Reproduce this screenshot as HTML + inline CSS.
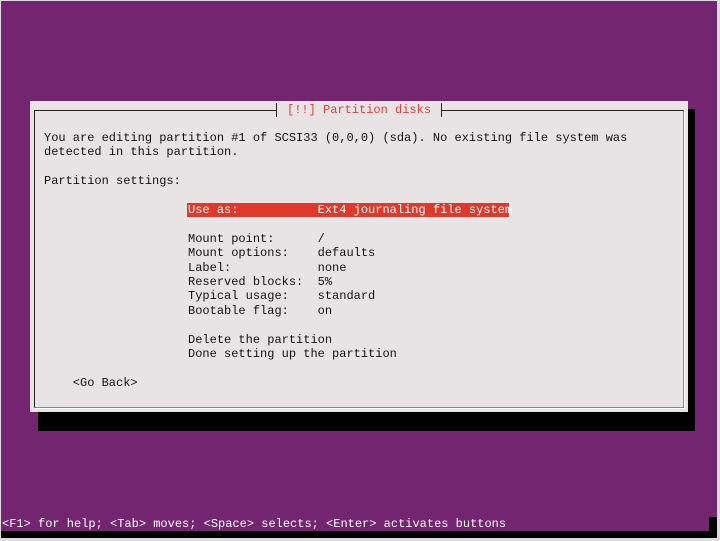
<!DOCTYPE html>
<html><head><style>
html,body{margin:0;padding:0}
body{width:720px;height:541px;background:#dcdcdc;position:relative;overflow:hidden;font-family:"Liberation Mono",monospace;font-size:12px}
.scr{position:absolute;left:1px;top:1px;width:716px;height:537px;background:#74256f}
.bot{position:absolute;left:1px;top:531px;width:716px;height:7px;background:#000}
.botr{position:absolute;left:709px;top:517px;width:8px;height:21px;background:#000}
.shadow{position:absolute;left:38px;top:412px;width:657px;height:19px;background:#000}
.shadow2{position:absolute;left:688px;top:109px;width:7px;height:322px;background:#000}
.dlg{position:absolute;left:30px;top:101px;width:658px;height:311px;background:#e8e4e6}
.frame{position:absolute;left:34px;top:110px;width:648px;height:296px;border:1px solid #222;border-right-color:#888;border-bottom-color:#888;box-shadow:1px 1px 0 #fff}
.title{position:absolute;left:276px;top:103px;height:15px;background:#e8e4e6;color:#e0403a;line-height:15px;white-space:pre;padding:0 11px}
.title:before,.title:after{content:"";position:absolute;top:0px;width:1px;height:14px;background:#222}
.title:before{left:0px}.title:after{right:0px}
pre{margin:0;position:absolute;font-family:"Liberation Mono",monospace;font-size:12px;line-height:14.4px;color:#111}
.hl{position:absolute;left:187px;top:203px;width:322px;height:14px;background:#e0392b}
.status{position:absolute;left:2px;top:517px;color:#fff;white-space:pre;line-height:14px}
</style></head><body>
<div class="scr"></div>
<div class="bot"></div><div class="botr"></div>
<div class="shadow"></div><div class="shadow2"></div>
<div class="dlg"></div>
<div class="frame"></div>
<div class="title">[!!] Partition disks</div>
<div class="hl"></div>
<pre style="left:44px;top:131px">You are editing partition #1 of SCSI33 (0,0,0) (sda). No existing file system was
detected in this partition.

Partition settings:

                    <span style="color:#fff">Use as:           Ext4 journaling file system</span>

                    Mount point:      /
                    Mount options:    defaults
                    Label:            none
                    Reserved blocks:  5%
                    Typical usage:    standard
                    Bootable flag:    on

                    Delete the partition
                    Done setting up the partition

    &lt;Go Back&gt;</pre>
<div class="status">&lt;F1&gt; for help; &lt;Tab&gt; moves; &lt;Space&gt; selects; &lt;Enter&gt; activates buttons</div>
</body></html>
